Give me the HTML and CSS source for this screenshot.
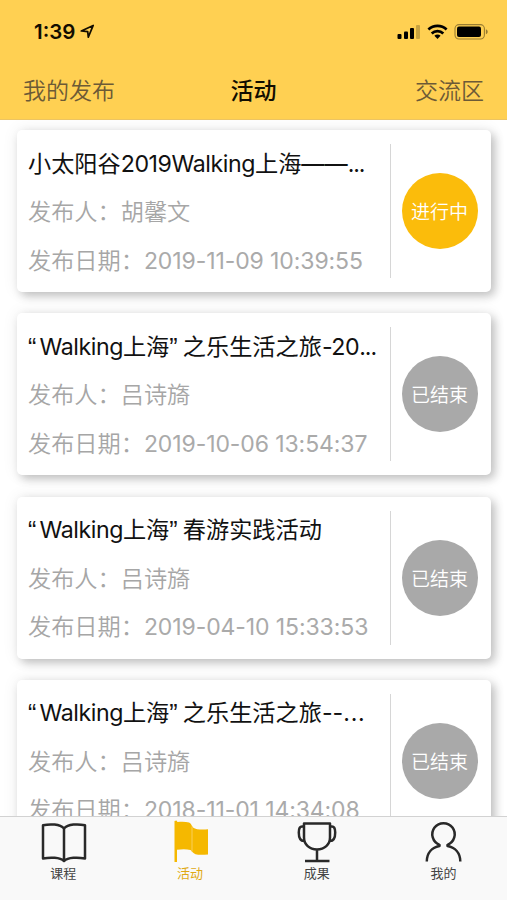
FILE: index.html
```html
<!DOCTYPE html>
<html lang="zh-CN">
<head>
<meta charset="utf-8">
<meta name="viewport" content="width=device-width, initial-scale=1">
<title>活动</title>
<link rel="stylesheet" href="styles.css">
</head>
<body>
<div class="app">
  <header class="header">
    <div class="status-bar">
      <div class="clock">
        <span>1:39</span>
        <svg class="location" width="15" height="15" viewBox="0 0 15 15"><path d="M1.3 7 13.2 1.4 8.3 13.2 7.7 7.6Z" fill="none" stroke="#120d00" stroke-width="1.7" stroke-linejoin="round"/></svg>
      </div>
      <svg width="92" height="18" viewBox="0 0 92 18">
        <g fill="#000">
          <rect x=".5" y="11" width="4" height="5" rx="1"/>
          <rect x="7" y="8.5" width="4" height="7.5" rx="1"/>
          <rect x="13" y="5" width="4" height="11" rx="1"/>
          <rect x="19" y="2" width="4" height="14" rx="1" opacity=".22"/>
        </g>
        <g fill="none" stroke="#000" stroke-width="2.7">
          <path d="M31.4 6.6a13.2 13.2 0 0 1 18.2 0"/>
          <path d="M34.7 10.4a8.4 8.4 0 0 1 11.6 0"/>
        </g>
        <path d="M37.4 12.8a4.4 4.4 0 0 1 6.2 0l-3.1 3.3Z" fill="#000"/>
        <rect x="58" y="1.600" width="29.400" height="14.400" rx="4" fill="none" stroke="#000" stroke-opacity=".4" stroke-width="1.100"/>
        <rect x="60" y="3.600" width="24" height="10.500" rx="2" fill="#000"/>
        <path d="M88.900 6.300c2.400.8 2.400 4.200 0 5Z" fill="#000" fill-opacity=".42"/>
      </svg>
    </div>
    <nav class="top-nav">
      <a class="nav-link">我的发布</a>
      <h1 class="nav-title">活动</h1>
      <a class="nav-link nav-link-end">交流区</a>
    </nav>
  </header>

  <main class="list">
    <article class="card">
      <div class="info">
        <h2 class="title">小太阳谷<span class="latin">2019Walking</span>上海——<span class="dots">...</span></h2>
        <p class="meta">发布人：胡馨文</p>
        <p class="meta">发布日期：<time>2019-11-09 10:39:55</time></p>
      </div>
      <div class="state"><span class="badge badge-active">进行中</span></div>
    </article>
    <article class="card">
      <div class="info">
        <h2 class="title"><span class="quote quote-open">“</span><span class="latin">Walking</span>上海<span class="quote quote-close">”</span>之乐生活之旅<span class="latin">-20</span><span class="dots">...</span></h2>
        <p class="meta">发布人：吕诗旖</p>
        <p class="meta">发布日期：<time>2019-10-06 13:54:37</time></p>
      </div>
      <div class="state"><span class="badge">已结束</span></div>
    </article>
    <article class="card">
      <div class="info">
        <h2 class="title"><span class="quote quote-open">“</span><span class="latin">Walking</span>上海<span class="quote quote-close">”</span>春游实践活动</h2>
        <p class="meta">发布人：吕诗旖</p>
        <p class="meta">发布日期：<time>2019-04-10 15:33:53</time></p>
      </div>
      <div class="state"><span class="badge">已结束</span></div>
    </article>
    <article class="card">
      <div class="info">
        <h2 class="title"><span class="quote quote-open">“</span><span class="latin">Walking</span>上海<span class="quote quote-close">”</span>之乐生活之旅--<span class="dots dots-wide">...</span></h2>
        <p class="meta">发布人：吕诗旖</p>
        <p class="meta">发布日期：<time>2018-11-01 14:34:08</time></p>
      </div>
      <div class="state"><span class="badge">已结束</span></div>
    </article>
  </main>

  <nav class="tab-bar">
    <a class="tab">
      <svg class="tab-icon" width="48" height="44" viewBox="-1 0.5 48 44"><path d="M24 9C20 4.500 10 4.200 3 5.800V39c7-1.300 17-1.300 21 2.500 4-3.800 14-3.800 21-2.500V5.800C38 4.200 28 4.500 24 9ZM24 9v32"/></svg>
      <span>课程</span>
    </a>
    <a class="tab tab-current">
      <svg class="tab-icon" width="48" height="44" viewBox="-1 0.5 48 44"><path class="flag" d="M7.500 1.500 9.500 1l1 1.500c4.500-.3 8.500-.3 11.500.5 2 .8 2.500 3 4 5 3.500 2.500 10 2.200 15 1.800V35c-5 .3-9.500.5-12.500-.3-2.500-1-3.500-3-5-4.200-4-1.200-9-1-13.500-.3V42.500H7.500Z"/><path class="fold" d="M25 7v25"/></svg>
      <span>活动</span>
    </a>
    <a class="tab">
      <svg class="tab-icon" width="48" height="44" viewBox="0.5 0.5 48 44"><path d="M11.500 4h26v14c0 7-5.500 12-13 12s-13-5-13-12ZM24.500 30v11.500M12.500 41.500h24.500M11.500 7h-2C7 7 6.300 9 6.300 13s1.200 8.500 5.200 8.500M37.500 7h2c2.500 0 3.200 2 3.200 6s-1.200 8.500-5.200 8.500"/></svg>
      <span>成果</span>
    </a>
    <a class="tab">
      <svg class="tab-icon" width="48" height="44" viewBox="1 0 48 44"><path d="M7.800 41.500c0-8.500 5.300-14 12.700-15.500v-1.200A11.200 11.200 0 1 1 28.500 24.800V26C36 27.500 41.300 33 41.300 41.500"/></svg>
      <span>我的</span>
    </a>
  </nav>
</div>
</body>
</html>
```
FILE: styles.css
```css
* {
  box-sizing: border-box;
}

body {
  margin: 0;
  background: #fff;
  font-family: Inter, "Noto Sans CJK SC", sans-serif;
}

.app {
  display: flex;
  flex-direction: column;
  height: 900px;
  overflow: hidden;
}

.header {
  position: relative;
  z-index: 1;
  flex: none;
  height: 120px;
  background: #ffd052;
  border-bottom: 1px solid #ecc463;
}

.status-bar {
  display: flex;
  justify-content: space-between;
  height: 63px;
  padding: 23px 18px 0 34px;
}

.clock {
  display: flex;
  gap: 5px;
  height: 18px;
  color: #120d00;
  font-size: 20.5px;
  font-weight: 600;
  line-height: 18px;
}

.location {
  margin-top: 1px;
}

.top-nav {
  display: grid;
  grid-template-columns: 1fr auto 1fr;
  align-items: center;
  height: 52px;
  padding: 0 23px;
}

.nav-link {
  color: #6c5a36;
  font-size: 23px;
  font-weight: 350;
}

.nav-link-end {
  text-align: right;
}

.nav-title {
  margin: 0;
  color: #120d00;
  font-size: 23px;
  font-weight: 500;
}

.list {
  display: flex;
  flex: 1;
  flex-direction: column;
  gap: 21.3px;
  min-height: 0;
  padding: 10px 16px 0 17px;
  overflow: hidden;
}

.card {
  display: flex;
  flex: none;
  height: 162px;
  padding: 14px 0;
  background: #fff;
  border-radius: 5px;
  box-shadow: 4px 4px 10px rgba(0, 0, 0, 0.22), 0 0 16px rgba(0, 0, 0, 0.08);
}

.info {
  flex: 1;
  min-width: 0;
  padding: 2.5px 0 0 11px;
  border-right: 1px solid #d6d6d6;
}

.title,
.meta {
  height: 34px;
  margin: 0 0 14.5px;
  font-size: 23.2px;
  line-height: 34px;
  white-space: nowrap;
}

.title {
  color: #111;
  font-weight: 400;
}

.latin {
  letter-spacing: -0.45px;
}

.dots {
  letter-spacing: -1.1px;
}

.dots-wide {
  letter-spacing: 0.7px;
}

.quote {
  display: inline-block;
  height: 34px;
  font-family: "Liberation Sans", sans-serif;
  font-size: 25px;
  vertical-align: top;
}

.quote-open {
  width: 11.5px;
}

.quote-close {
  width: 13.5px;
}

.meta {
  color: #a6a6a6;
  font-weight: 350;
}

.meta time {
  color: #aaa;
  font-size: 23px;
  font-weight: 400;
  letter-spacing: -0.1px;
}

.state {
  display: flex;
  flex: none;
  align-items: center;
  justify-content: center;
  width: 100px;
}

.badge {
  width: 76px;
  height: 76px;
  padding-top: 2px;
  margin-right: 3px;
  border-radius: 50%;
  background: #a9a9a9;
  color: #fff;
  font-size: 19px;
  font-weight: 350;
  line-height: 76px;
  text-align: center;
}

.badge-active {
  background: #fbbc0b;
}

.tab-bar {
  position: relative;
  display: grid;
  flex: none;
  grid-template-columns: repeat(4, 1fr);
  height: 84px;
  background: #f9f9f9;
  border-top: 1px solid #d2d2d2;
}

.tab {
  display: flex;
  flex-direction: column;
  align-items: center;
  padding-top: 3px;
  color: #444;
  font-size: 13px;
  line-height: 19px;
}

.tab-icon {
  fill: none;
  stroke: #292929;
  stroke-width: 2.5;
  stroke-linejoin: round;
}

.tab-current {
  color: #e0a914;
}

.tab-icon .flag {
  fill: #f5b800;
  stroke: none;
}

.tab-icon .fold {
  stroke: #f9ce59;
  stroke-width: 1;
}
```
